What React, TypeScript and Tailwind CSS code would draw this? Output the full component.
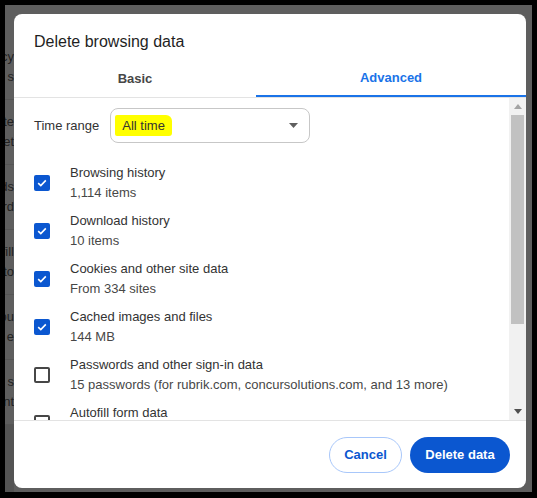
import React from "react"

const rows = [
    { label: "Browsing history", sub: "1,114 items", checked: true },
    { label: "Download history", sub: "10 items", checked: true },
    { label: "Cookies and other site data", sub: "From 334 sites", checked: true },
    { label: "Cached images and files", sub: "144 MB", checked: true },
    {
        label: "Passwords and other sign-in data",
        sub: "15 passwords (for rubrik.com, concursolutions.com, and 13 more)",
        checked: false,
    },
    { label: "Autofill form data", sub: "", checked: false },
]

// bits of the settings page peeking out from behind the dialog
const behind = [
    ["Privacy", "s"],
    ["Delete", "Delet"],
    ["Passwords", "Passwo rd"],
    ["Autofill", "Setup to"],
    ["You", "Site e"],
    ["Site s", "Payment"],
]

function Checkbox(props: { checked: boolean }) {
    if (props.checked) {
        return (
            <div className="flex h-4 w-4 shrink-0 items-center justify-center rounded-[2px] bg-[#0b57d0]">
                <svg width="10" height="8" viewBox="0 0 10 8" fill="none">
                    <path d="M1.2 4.2 3.8 6.6 8.8 1.4" stroke="white" strokeWidth="1.6" />
                </svg>
            </div>
        )
    }
    return <div className="h-4 w-4 shrink-0 rounded-[2px] border-2 border-[#474747]" />
}

function Row(props: { label: string; sub: string; checked: boolean }) {
    return (
        <div className="flex h-10 shrink-0 items-center gap-5">
            <Checkbox checked={props.checked} />
            <div className="flex flex-col text-[13px] leading-5">
                <span className="h-5 whitespace-nowrap text-[#333]">{props.label}</span>
                <span className="h-5 whitespace-nowrap text-[#474747]">{props.sub}</span>
            </div>
        </div>
    )
}

export default function App() {
    return (
        <div className="h-[498px] w-[537px] bg-black pb-[6px] pl-[5px] pr-[5px] pt-[5px] font-['Segoe_UI','Liberation_Sans',sans-serif]">
            <div className="relative h-full w-full overflow-hidden bg-[#5e5e5e]">
                <div className="absolute left-0 top-0 flex w-[9px] flex-col overflow-hidden pt-[30px] text-[13px] leading-5 text-[#222]">
                    {behind.map((b, i) => (
                        <div
                            key={i}
                            className="flex h-[65px] shrink-0 flex-col items-end justify-center border-b border-[#555]"
                        >
                            <span className="whitespace-nowrap">{b[0]}</span>
                            <span className="whitespace-nowrap">{b[1]}</span>
                        </div>
                    ))}
                    <div className="h-[100px] bg-[#545454]" />
                </div>

                <div className="relative ml-[9px] mt-[9px] flex h-[474px] w-[512px] flex-col overflow-hidden rounded-[8px] bg-white">
                    <div className="px-5 pt-[18px] text-[16px] leading-5 text-[#1f1f1f]">
                        Delete browsing data
                    </div>
                    <div className="mt-[7px] flex h-[39px] border-b border-[#e3e3e3] text-[13px] font-semibold">
                        <div className="flex w-[242px] items-center justify-center pt-[2px] text-[#474747]">
                            Basic
                        </div>
                        <div className="flex flex-1 items-center justify-center border-b-2 border-[#1a73e8] pt-[2px] text-[#1a73e8]">
                            Advanced
                        </div>
                    </div>

                    <div className="flex h-[322px]">
                        <div className="flex flex-1 flex-col gap-2 overflow-hidden px-5 pt-[10px]">
                            <div className="flex items-center gap-[11px]">
                                <span className="whitespace-nowrap text-[13px] text-[#333]">Time range</span>
                                <div className="flex h-[35px] w-[200px] items-center justify-between rounded-[8px] border border-[#c7c7c7] pl-[4px] pr-[11px]">
                                    <span className="rounded-[2px_6px_3px_2px] bg-[#ffff00] px-[7px] py-[1px] text-[13px] text-[#333]">
                                        All time
                                    </span>
                                    <svg width="9" height="5" viewBox="0 0 9 5">
                                        <path d="M0 0h9L4.5 5z" fill="#5f5f5f" />
                                    </svg>
                                </div>
                            </div>
                            <div className="h-[4px] shrink-0" />
                            {rows.map((r) => (
                                <Row key={r.label} {...r} />
                            ))}
                        </div>
                        <div className="flex w-[17px] flex-col items-center bg-[#f1f1f1]">
                            <svg className="mt-[6px]" width="8" height="5" viewBox="0 0 8 5">
                                <path d="M4 0 8 5H0z" fill="#a3a3a3" />
                            </svg>
                            <div className="mt-[6px] h-[209px] w-[13px] bg-[#c1c1c1]" />
                            <div className="flex-1" />
                            <svg className="mb-[6px]" width="8" height="5" viewBox="0 0 8 5">
                                <path d="M0 0h8L4 5z" fill="#505050" />
                            </svg>
                        </div>
                    </div>

                    <div className="flex flex-1 items-start justify-end gap-2 border-t border-[#e3e3e3] pr-4 pt-[16px] text-[13px] font-semibold">
                        <button className="h-9 w-[73px] rounded-full border border-[#a8c7fa] text-[#0b57d0]">
                            Cancel
                        </button>
                        <button className="h-9 w-[100px] rounded-full bg-[#0b57d0] text-white">
                            Delete data
                        </button>
                    </div>
                </div>
            </div>
        </div>
    )
}
